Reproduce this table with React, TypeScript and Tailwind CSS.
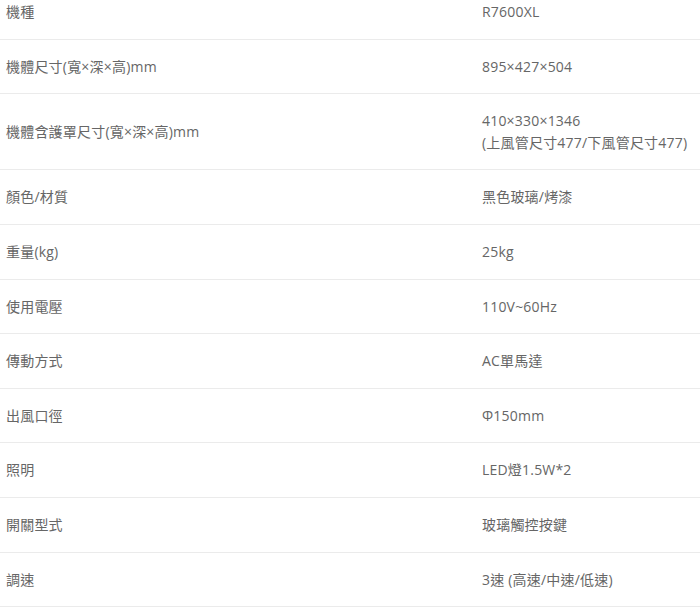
const specs: { label: string; value: string[] }[] = [
  { label: "機種", value: ["R7600XL"] },
  { label: "機體尺寸(寬×深×高)mm", value: ["895×427×504"] },
  { label: "機體含護罩尺寸(寬×深×高)mm", value: ["410×330×1346", "(上風管尺寸477/下風管尺寸477)"] },
  { label: "顏色/材質", value: ["黑色玻璃/烤漆"] },
  { label: "重量(kg)", value: ["25kg"] },
  { label: "使用電壓", value: ["110V~60Hz"] },
  { label: "傳動方式", value: ["AC單馬達"] },
  { label: "出風口徑", value: ["Φ150mm"] },
  { label: "照明", value: ["LED燈1.5W*2"] },
  { label: "開關型式", value: ["玻璃觸控按鍵"] },
  { label: "調速", value: ["3速 (高速/中速/低速)"] },
];

export default function App() {
  return (
    <div className="h-[612px] w-[700px] overflow-hidden bg-white font-['Open_Sans','Noto_Sans_CJK_TC',sans-serif] text-[14px] leading-[21.6px] tracking-[0.2px] text-[#666]">
      <div className="-mt-[15px]">
        {specs.map((row) => (
          <div key={row.label} className="grid grid-cols-[476px_1fr] border-b border-[#ebebeb]">
            <div className="flex items-center px-[6px] py-4">{row.label}</div>
            <div className="px-[6px] py-4">
              {row.value.map((line) => (
                <div key={line}>{line}</div>
              ))}
            </div>
          </div>
        ))}
      </div>
    </div>
  );
}
